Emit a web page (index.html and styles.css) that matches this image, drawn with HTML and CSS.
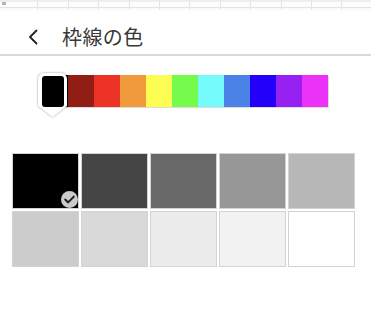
FILE: index.html
```html
<!DOCTYPE html>
<html lang="ja">
  <head>
    <meta charset="UTF-8" />
    <meta name="viewport" content="width=device-width, initial-scale=1.0" />
    <title>枠線の色</title>
    <link rel="stylesheet" href="styles.css">
  </head>
  <body>
    <div class="sheet">
      <div class="sheet-row first">
        <span class="row-head"><i></i></span>
        <span></span><span></span><span></span><span></span><span></span><span></span>
        <span></span><span></span><span></span><span></span><span></span><span></span>
      </div>
      <div class="sheet-row">
        <span class="row-head"><i></i></span>
        <span></span><span></span><span></span><span></span><span></span><span></span>
        <span></span><span></span><span></span><span></span><span></span><span></span>
      </div>
    </div>

    <div class="header">
      <svg class="back" width="10" height="16" viewBox="0 0 10 16">
        <path d="M8.5 1.5 L2 8 L8.5 14.5" fill="none" stroke="#222" stroke-width="1.8" stroke-linecap="round" stroke-linejoin="round"/>
      </svg>
      <h1 class="title">枠線の色</h1>
    </div>

    <div class="palette">
      <div class="strip">
        <span class="swatch" style="background:#000000"></span>
        <span class="swatch" style="background:#921d14"></span>
        <span class="swatch" style="background:#ec3326"></span>
        <span class="swatch" style="background:#f09a3c"></span>
        <span class="swatch" style="background:#fdfd54"></span>
        <span class="swatch" style="background:#75fb4c"></span>
        <span class="swatch" style="background:#76fbfd"></span>
        <span class="swatch" style="background:#4b82e7"></span>
        <span class="swatch" style="background:#2300f7"></span>
        <span class="swatch" style="background:#9721f0"></span>
        <span class="swatch" style="background:#ea33f7"></span>
      </div>
      <div class="marker">
        <div class="marker-body"><span class="marker-fill"></span></div>
      </div>
    </div>

    <div class="shades">
      <div class="shade selected" style="background:#000000">
        <span class="check">
          <svg width="11" height="9" viewBox="0 0 11 9">
            <path d="M1.2 4.6 L4.2 7.4 L9.8 1.6" fill="none" stroke="#1e1e1e" stroke-width="2" stroke-linecap="round" stroke-linejoin="round"/>
          </svg>
        </span>
      </div>
      <div class="shade" style="background:#454545"></div>
      <div class="shade" style="background:#686868"></div>
      <div class="shade" style="background:#979797"></div>
      <div class="shade" style="background:#b7b7b7"></div>
      <div class="shade" style="background:#cccccc"></div>
      <div class="shade" style="background:#d9d9d9"></div>
      <div class="shade" style="background:#ececec"></div>
      <div class="shade" style="background:#f2f2f2"></div>
      <div class="shade" style="background:#ffffff"></div>
    </div>
  </body>
</html>
```

FILE: styles.css
```css
body {
  margin: 0;
  background-color: white;
  font-family: "Noto Sans CJK JP", "Noto Sans", sans-serif;
  color: #333;
}
.sheet {
  height: 10px;
  overflow: hidden;
  background-color: #fafafa;
}
.sheet-row {
  display: flex;
  height: 7px;
  border-bottom: 1px solid #e4e4e6;
}
.sheet-row.first {
  background: linear-gradient(#eeeeee 0 2px, #fdfdfd 2px);
}
.sheet-row span {
  flex: 0 0 30.4px;
  border-right: 1px solid #e4e4e6;
  box-sizing: border-box;
}
.sheet-row .row-head {
  flex: 0 0 8px;
  border-right: none;
}
.row-head i {
  display: block;
  width: 4px;
  height: 3px;
  margin: 2px 0 0 2px;
  background-color: #b4b4b4;
}
.header {
  display: flex;
  align-items: center;
  box-sizing: border-box;
  height: 46px;
  padding: 8px 0 0 28px;
  border-bottom: 2px solid #d9d9dd;
}
.back {
  margin-top: 1px;
}
.title {
  margin: 0 0 0 24px;
  font-size: 20px;
  font-weight: normal;
  color: #383838;
  letter-spacing: 0.4px;
}
.palette {
  position: relative;
  margin-top: 19px;
  padding-left: 42px;
}
.strip {
  display: flex;
  width: 286px;
  box-shadow: 1px 1px 0 #dcdcdc;
}
.swatch {
  width: 26px;
  height: 32px;
}
.marker {
  position: absolute;
  left: 38px;
  top: -2px;
  filter: drop-shadow(0 0.5px 1.2px rgba(0, 0, 0, 0.4));
}
.marker-body {
  width: 29px;
  height: 44px;
  box-sizing: border-box;
  padding: 3px 3px 0 4px;
  background-color: white;
  border-radius: 6px 6px 0 0;
  clip-path: polygon(0 0, 100% 0, 100% 33px, 50% 100%, 0 33px);
}
.marker-fill {
  display: block;
  width: 22px;
  height: 31px;
  background-color: black;
  border-radius: 3px;
}
.shades {
  display: grid;
  grid-template-columns: repeat(5, 67px);
  grid-auto-rows: 56px;
  gap: 2px;
  margin: 46px 0 0 12px;
}
.shade {
  position: relative;
  border: 1px solid #d3d3d7;
  box-sizing: border-box;
}
.check {
  position: absolute;
  right: 0;
  bottom: 0;
  width: 17px;
  height: 17px;
  border-radius: 50%;
  background-color: #cbcbcb;
  display: flex;
  align-items: center;
  justify-content: center;
}
```
